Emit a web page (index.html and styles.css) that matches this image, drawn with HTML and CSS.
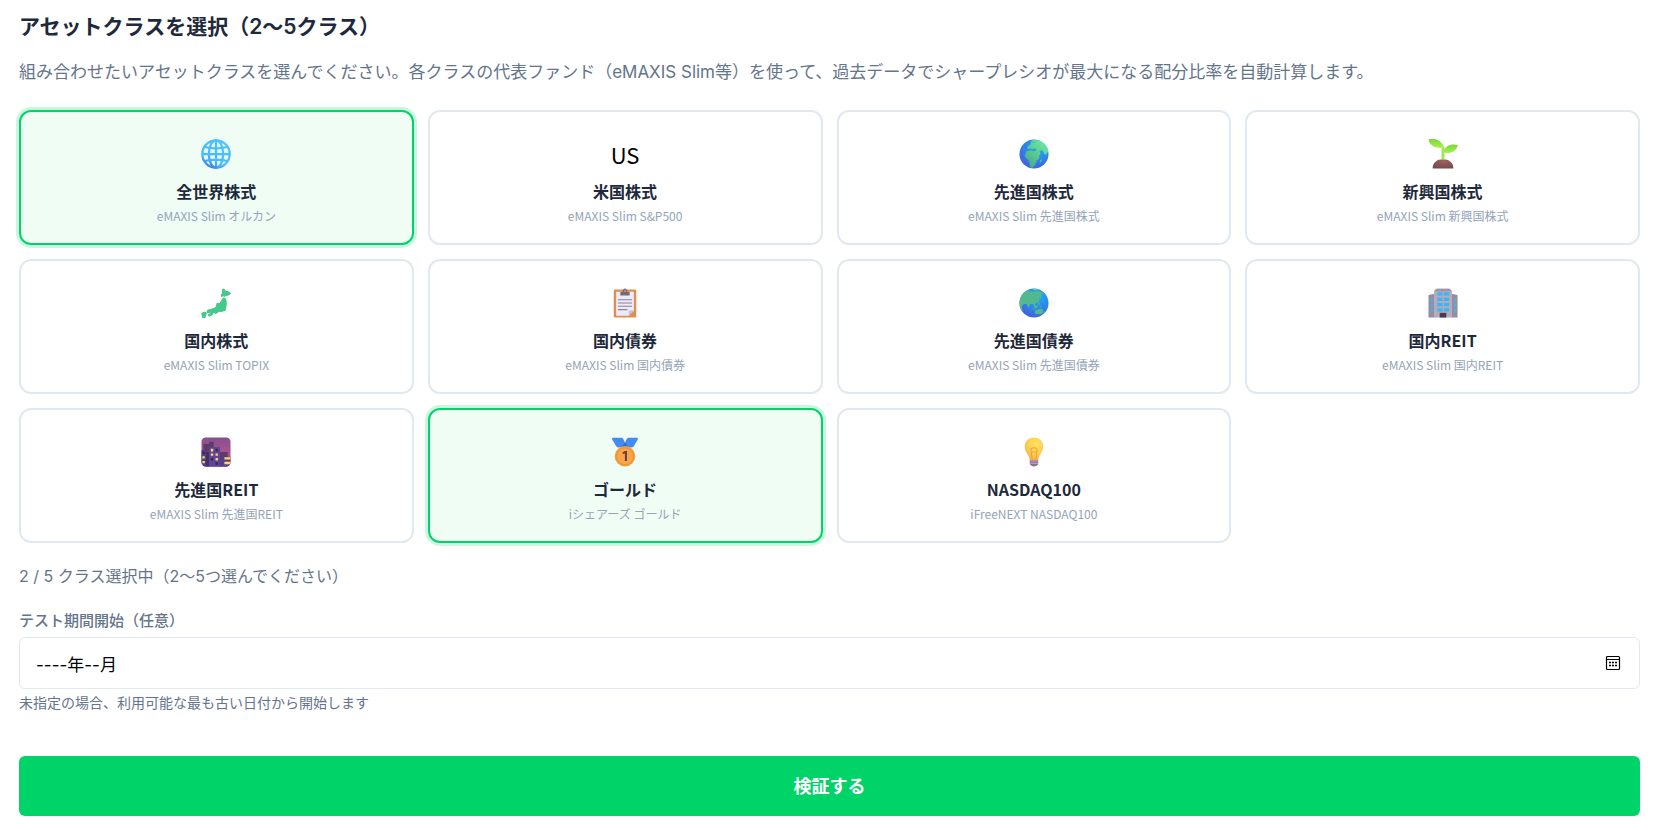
FILE: index.html
```html
<!DOCTYPE html>
<html lang="ja">
<head>
<meta charset="utf-8">
<meta name="viewport" content="width=device-width, initial-scale=1">
<title>アセットクラスを選択</title>
<link rel="stylesheet" href="styles.css">
</head>
<body>
<main class="page">
  <h1 class="heading">アセットクラスを選択（2〜5クラス）</h1>
  <p class="lead">組み合わせたいアセットクラスを選んでください。各クラスの代表ファンド（eMAXIS Slim等）を使って、過去データでシャープレシオが最大になる配分比率を自動計算します。</p>

  <form class="form">
    <div class="grid">
      <button type="button" class="card card-selected" aria-pressed="true">
        <span class="card-icon"><svg class="emoji" viewBox="0 0 32 32" aria-hidden="true">
          <defs><linearGradient id="wire" x1="0.7" y1="0" x2="0.2" y2="1"><stop offset="0" stop-color="#4cc4fc"/><stop offset="0.7" stop-color="#48baf9"/><stop offset="1" stop-color="#3a7cea"/></linearGradient></defs>
          <circle cx="16" cy="16" r="15" fill="#e4f6ff"/>
          <g fill="none" stroke="url(#wire)" stroke-width="2.400"><circle cx="16" cy="16" r="14.600"/><ellipse cx="16" cy="16" rx="7.600" ry="14.600"/><path d="M16 1v30.010M1 16h30.010M4 8.500Q16 11.500 28 8.500M4 23.500Q16 20.500 28 23.500"/></g>
        </svg></span>
        <span class="card-title">全世界株式</span>
        <span class="card-fund">eMAXIS Slim オルカン</span>
      </button>

      <button type="button" class="card" aria-pressed="false">
        <span class="card-icon">US</span>
        <span class="card-title">米国株式</span>
        <span class="card-fund">eMAXIS Slim S&amp;P500</span>
      </button>

      <button type="button" class="card" aria-pressed="false">
        <span class="card-icon"><svg class="emoji" viewBox="0 0 32 32" aria-hidden="true">
          <defs><radialGradient id="sea" cx="0.65" cy="0.25" r="0.85"><stop offset="0" stop-color="#20a8f8"/><stop offset="0.6" stop-color="#2f80e8"/><stop offset="1" stop-color="#4658d8"/></radialGradient>
          <linearGradient id="land" x1="1" y1="0" x2="0.2" y2="1"><stop offset="0" stop-color="#72f5a0"/><stop offset="1" stop-color="#48a888"/></linearGradient>
          <clipPath id="ball"><circle cx="16" cy="16" r="15.500"/></clipPath></defs>
          <circle cx="16" cy="16" r="15.500" fill="url(#sea)"/>
          <g fill="url(#land)" clip-path="url(#ball)"><path d="M9 8l3-2 1-3 3 1 3-3 9 2 4 8v4l-2-1-1 3-2-1-2-4-3 1 1 3-2 2 1 2-3 3-2 5-3 3-2-1-1-6-2-3H8l-2-3 2-5 4-1 4 1 3-1-2-2-3 1-2-1-3 1z"/><path d="M12 2.500l4-1.500h3l-3 2.500zM22.500 22.500l1.500-1 0 2.500-1.500 1z"/></g>
        </svg></span>
        <span class="card-title">先進国株式</span>
        <span class="card-fund">eMAXIS Slim 先進国株式</span>
      </button>

      <button type="button" class="card" aria-pressed="false">
        <span class="card-icon"><svg class="emoji" viewBox="0 0 32 32" aria-hidden="true">
          <defs><linearGradient id="leaf" x1="0" y1="0" x2="0" y2="1"><stop offset="0" stop-color="#78d83a"/><stop offset="1" stop-color="#a8f04c"/></linearGradient>
          <radialGradient id="soil" cx="0.55" cy="0.25" r="0.8"><stop offset="0" stop-color="#9c605c"/><stop offset="1" stop-color="#724a4c"/></radialGradient></defs>
          <path d="M5 31.500C4.500 25 10 21.500 16 21.500S27.500 25 27 31.500z" fill="url(#soil)"/>
          <path d="M14.500 8h3v14h-3z" fill="#98e650"/>
          <path d="M.5.500c8-1.500 14 1 16.500 8.500-8 1.500-15-1-16.500-8.500z" fill="url(#leaf)"/>
          <path d="M32 6.500c-7.500-1.500-13 0-16.500 8 7.500 1.500 14 0 16.500-8z" fill="url(#leaf)"/>
        </svg></span>
        <span class="card-title">新興国株式</span>
        <span class="card-fund">eMAXIS Slim 新興国株式</span>
      </button>

      <button type="button" class="card" aria-pressed="false">
        <span class="card-icon"><svg class="emoji" viewBox="0 0 32 32" aria-hidden="true">
          <g fill="#44cb8b" stroke="#3fc184" stroke-width="1" stroke-linejoin="round"><path d="M23 1.500l1.500-.5 1.500 2.500 3.500.5 2 1.500-2 2-3 .5-1.500 1-1.500-.8-1.500 1-.5-2 1.500-1.500z"/><path d="M23 11.500l1.500-1 2 1.500.5 4.500-.5 3.500-.3 3.500-3.200 1.200-4.500.6-2.500 2-2.500-1.200-3.500-.1-3.500.3.200-2.500 3.800-1 3.500-1 2.500-2 .5-3.300 1.500-.4.8 1 2.200-2.600z"/><path d="M7.500 28.800l2.500-1.500 3-.3-1 1.500-3.500 1.500zM.8 27l2.500-1.200 2.200.5-.3 2.500-1.200 3-2.200.2z"/></g>
        </svg></span>
        <span class="card-title">国内株式</span>
        <span class="card-fund">eMAXIS Slim TOPIX</span>
      </button>

      <button type="button" class="card" aria-pressed="false">
        <span class="card-icon"><svg class="emoji" viewBox="0 0 32 32" aria-hidden="true">
          <rect x="4" y="1.500" width="24" height="30" rx="1.500" fill="#df8e50"/>
          <path d="M6.500 4h19v20l-5.500 5.500H6.500z" fill="#eeeaf7"/><path d="M25.500 24h-5.500v5.500z" fill="#c8bedc"/>
          <path d="M11 8V5q0-1 1-1h1.500q.5-3.500 2.500-3.500T18.500 4H20q1 0 1 1v3z" fill="#766b74"/><circle cx="16" cy="3.200" r="1" fill="#df9a68"/>
          <path d="M8.500 12.500h15M8.500 16h15M8.500 19.500h15M8.500 23h10" stroke="#8b7f9a" stroke-width="1.200"/>
        </svg></span>
        <span class="card-title">国内債券</span>
        <span class="card-fund">eMAXIS Slim 国内債券</span>
      </button>

      <button type="button" class="card" aria-pressed="false">
        <span class="card-icon"><svg class="emoji" viewBox="0 0 32 32" aria-hidden="true">
          <circle cx="16" cy="16" r="15.500" fill="url(#sea)"/>
          <g fill="#52b98e" clip-path="url(#ball)"><path d="M2 8l7-6 3 1 2 1 5-1 8 2-3 1 0 3-3 1 1 3-2 2-3 2 2 3-1 3-2-3-1-3-3 0-2 4-2-4-3 0-2 3 1 4-2 4-4-7z"/><path d="M22 8l2-1-.5 4-2 1zM20 15l1.500-.5.5 4-1.500-1zM14 20l2.500 3-1 .5zM18 19.500l2-1-.5 3zM21 19l3 1-1 1zM17 24.500l4-2 4 0 1.500 3.500-3 2-6.500-.5zM27 25l1.500 0-1.500 3z"/><path d="M13 1l4-1 4 1.500-4 .5z" fill="#65dca0"/></g>
        </svg></span>
        <span class="card-title">先進国債券</span>
        <span class="card-fund">eMAXIS Slim 先進国債券</span>
      </button>

      <button type="button" class="card" aria-pressed="false">
        <span class="card-icon"><svg class="emoji" viewBox="0 0 32 32" aria-hidden="true">
          <path d="M.5 7.500L7 6v25.500H.5zM31.500 7.500L25 6v25.500h6.500z" fill="#9a8c9f"/>
          <path d="M6.500 3.500L9 .8h14l2.500 2.700v28h-19z" fill="#b4aabb"/><path d="M6.500 3.500L9 .8h14l2.500 2.700z" fill="#a094a6"/>
          <path d="M10 4.500h5.500V8H10zM17 4.500h5.500V8H17zM10 10.300h5.500v3.500H10zM17 10.300h5.500v3.500H17zM10 16h5.500v3.500H10zM17 16h5.500v3.500H17zM10 21.500h5.500V25H10zM17 21.500h5.500V25H17zM3 11.500h2V15H3zM3 17h2v3.500H3zM3 22.500h2V26H3zM28 11.500h2V15h-2zM28 17h2v3.500h-2zM28 22.500h2V26h-2z" fill="#36b8f8"/>
          <path d="M12.500 26.500h7v5h-7z" fill="#493b50"/>
        </svg></span>
        <span class="card-title">国内REIT</span>
        <span class="card-fund">eMAXIS Slim 国内REIT</span>
      </button>

      <button type="button" class="card" aria-pressed="false">
        <span class="card-icon"><svg class="emoji" viewBox="0 0 32 32" aria-hidden="true">
          <defs><linearGradient id="dusk" x1="0" y1="0" x2="0" y2="1"><stop offset="0" stop-color="#835090"/><stop offset="1" stop-color="#d2558b"/></linearGradient><clipPath id="tile"><rect x=".5" y=".5" width="31" height="31" rx="4.500"/></clipPath></defs>
          <g clip-path="url(#tile)"><path d="M0 0h32v32H0z" fill="url(#dusk)"/><path d="M2.500 7.500h6V5h5v6H20v5h8.500v16h-26z" fill="#5c3c6c"/>
          <path d="M0 14h5.500v18H0z" fill="#54408a"/><path d="M5.500 16h3v16h-3z" fill="#44305f"/><path d="M8.500 11h11.500v21H8.500z" fill="#60459a"/><path d="M20 24h4v-3h8v11H20z" fill="#57408d"/>
          <path d="M10.500 12.500H13v3h-2.500zM10.500 17.500H13v2.500h-2.500zM15.500 17.500H18v2.500h-2.500zM15.500 22.500H18v2.500h-2.500zM1.500 20.500H4V23H1.500zM1.500 25.500H4V28H1.500zM25 21.500h7v2.500h-7zM25 26.500h7V29h-7z" fill="#ffd95f"/><path d="M15.500 12.500H18v3h-2.500zM10.500 22.500H13v2.500h-2.500zM15.500 27H18v2.500h-2.500zM1.500 15.500H4V18H1.500z" fill="#33294f"/></g>
        </svg></span>
        <span class="card-title">先進国REIT</span>
        <span class="card-fund">eMAXIS Slim 先進国REIT</span>
      </button>

      <button type="button" class="card card-selected" aria-pressed="true">
        <span class="card-icon"><svg class="emoji" viewBox="0 0 32 32" aria-hidden="true">
          <path d="M3 .8h9.500Q14 .8 16 6q2-5.200 3.500-5.200H29q1.500 0 .5 2.200l-4 6.500q-1 1.800-3 1.800H9.500q-2 0-3-1.800L2.500 3Q1.500.8 3 .8z" fill="#438bee"/><path d="M12 11.300L16 6l4 5.300z" fill="#3267d0"/>
          <circle cx="16" cy="20.500" r="11" fill="#efa43c"/><circle cx="16" cy="20.500" r="9" fill="#f9a548" stroke="#e8873e" stroke-width=".8"/>
          <path d="M13.800 17.500l2.400-1.500h.8v9.500" fill="none" stroke="#6f3c50" stroke-width="2.200"/>
        </svg></span>
        <span class="card-title">ゴールド</span>
        <span class="card-fund">iシェアーズ ゴールド</span>
      </button>

      <button type="button" class="card" aria-pressed="false">
        <span class="card-icon"><svg class="emoji" viewBox="0 0 32 32" aria-hidden="true">
          <defs><radialGradient id="glow" cx="0.6" cy="0.3" r="0.75"><stop offset="0" stop-color="#ffe35e"/><stop offset="0.6" stop-color="#fccf50"/><stop offset="1" stop-color="#f5a94a"/></radialGradient></defs>
          <path d="M16 .5c-5.800 0-9.800 4.200-9.800 9.500 0 6.500 4.800 8.500 5.300 14.500h9c.5-6 5.300-8 5.300-14.500C25.800 4.700 21.800.5 16 .5z" fill="url(#glow)"/>
          <path d="M14 24l-1-8q-1.500-4.500 3-4.500T19 16l-1 8M13 16h6" fill="none" stroke="#f3a23c" stroke-width="1.200"/>
          <path d="M11.500 24.500h9V29q-2 2.500-4.500 2.500T11.500 29z" fill="#8d7193"/><path d="M11.500 25.500h9M11.500 28h9" stroke="#c6acd6" stroke-width="1"/>
        </svg></span>
        <span class="card-title">NASDAQ100</span>
        <span class="card-fund">iFreeNEXT NASDAQ100</span>
      </button>
    </div>

    <p class="count">2 / 5 クラス選択中（2〜5つ選んでください）</p>

    <div class="field">
      <label class="label" for="start">テスト期間開始（任意）</label>
      <div class="control">
        <input class="input" id="start" type="text" value="----年--月" aria-describedby="start-hint">
        <button type="button" class="picker" aria-label="月を選択"><svg class="picker-icon" viewBox="0 0 16 16" aria-hidden="true"><rect x="1.500" y="1.500" width="13" height="13" rx="1" fill="none" stroke="#000" stroke-width="1.200"/><path d="M2 4.500h12" stroke="#000" stroke-width="1"/><path d="M4 7.500h2M7 7.500h2M10 7.500h2M4 10.500h2M7 10.500h2M10 10.500h2" stroke="#000" stroke-width="1.400"/></svg></button>
      </div>
      <p class="hint" id="start-hint">未指定の場合、利用可能な最も古い日付から開始します</p>
    </div>

    <button type="submit" class="submit">検証する</button>
  </form>
</main>
</body>
</html>
```
FILE: styles.css
```css
*, *::before, *::after { box-sizing: border-box; }

body {
  margin: 0;
  background: #fff;
  color: #1e293b;
  font-family: Inter, "Noto Sans CJK JP", sans-serif;
}

h1, p { margin: 0; }

.page { padding: 11px 20px 12px 19px; }

.heading {
  font-size: 21px;
  line-height: 32px;
  font-weight: 600;
}

.lead {
  margin: 13px 0 22px;
  font-size: 17px;
  line-height: 32px;
  color: #64748b;
}

.grid {
  display: grid;
  grid-template-columns: repeat(4, 1fr);
  gap: 14px;
}

.card {
  display: flex;
  flex-direction: column;
  align-items: center;
  padding: 18px 16px;
  border: 2px solid #e2e8f0;
  border-radius: 12px;
  background: #fff;
  font-family: "Noto Sans CJK JP", sans-serif;
  text-align: center;
  cursor: pointer;
}

.card-selected {
  border-color: #00d469;
  background: #f0fdf4;
  box-shadow: 0 0 0 3px rgba(0, 212, 105, 0.2);
}

.card-icon {
  display: flex;
  align-items: center;
  justify-content: center;
  height: 48px;
  font-size: 22px;
  color: #000;
}

.emoji { width: 30px; height: 30px; }

.card-title {
  margin: 0 0 2px;
  font-size: 16px;
  line-height: 26px;
  font-weight: 600;
  color: #1e293b;
}

.card-fund {
  font-size: 12px;
  line-height: 19px;
  color: #94a3b8;
}

.count {
  margin-top: 20px;
  font-size: 16px;
  line-height: 26px;
  color: #64748b;
}

.field { margin-top: 20px; }

.label {
  display: block;
  font-size: 15px;
  line-height: 24px;
  font-weight: 500;
  color: #64748b;
}

.control {
  display: flex;
  align-items: center;
  margin-top: 4px;
  padding-right: 16px;
  border: 1px solid #e2e8f0;
  border-radius: 6px;
}

.input {
  flex: 1;
  min-width: 0;
  height: 50px;
  padding: 0 16px;
  border: 0;
  background: transparent;
  font: 17px/24px Inter, "Noto Sans CJK JP", sans-serif;
  color: #000;
}

.picker {
  display: flex;
  padding: 2px;
  border: 0;
  background: none;
  cursor: pointer;
}

.picker-icon { width: 16px; height: 16px; }

.hint {
  margin-top: 2px;
  font-size: 14px;
  line-height: 24px;
  color: #64748b;
}

.submit {
  width: 100%;
  margin-top: 41px;
  padding: 17px 16px 15px;
  border: 0;
  border-radius: 6px;
  background: #00d469;
  color: #fff;
  font: 600 18px/28px Inter, "Noto Sans CJK JP", sans-serif;
  cursor: pointer;
}
```
